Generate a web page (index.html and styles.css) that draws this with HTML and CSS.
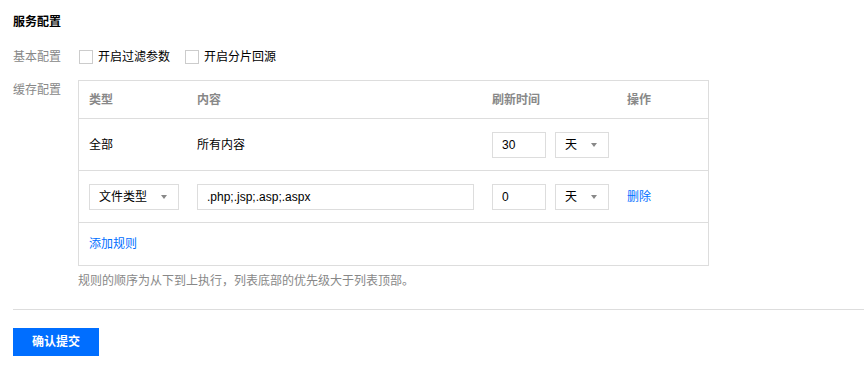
FILE: index.html
```html
<!DOCTYPE html>
<html lang="zh-CN">
<head>
  <meta charset="UTF-8">
  <meta name="viewport" content="width=device-width, initial-scale=1.0">
  <title>服务配置</title>
  <link rel="stylesheet" href="styles.css">
</head>
<body>
  <div class="page">
    <h3 class="section-title">服务配置</h3>

    <div class="form-row">
      <label class="form-label">基本配置</label>
      <div class="form-ctrl checks">
        <label class="check"><input type="checkbox"><span>开启过滤参数</span></label>
        <label class="check"><input type="checkbox"><span>开启分片回源</span></label>
      </div>
    </div>

    <div class="form-row cache-row">
      <label class="form-label">缓存配置</label>
      <div class="form-ctrl">
        <div class="rule-table">
          <div class="tr th">
            <div class="td">类型</div>
            <div class="td">内容</div>
            <div class="td">刷新时间</div>
            <div class="td">操作</div>
          </div>
          <div class="tr">
            <div class="td">全部</div>
            <div class="td">所有内容</div>
            <div class="td time">
              <input class="text-input num" type="text" value="30">
              <div class="dropdown unit">天<i class="caret"></i></div>
            </div>
            <div class="td"></div>
          </div>
          <div class="tr">
            <div class="td">
              <div class="dropdown type">文件类型<i class="caret"></i></div>
            </div>
            <div class="td">
              <input class="text-input content" type="text" value=".php;.jsp;.asp;.aspx">
            </div>
            <div class="td time">
              <input class="text-input num" type="text" value="0">
              <div class="dropdown unit">天<i class="caret"></i></div>
            </div>
            <div class="td"><a class="link" href="#">删除</a></div>
          </div>
          <div class="tr last">
            <div class="td"><a class="link" href="#">添加规则</a></div>
          </div>
        </div>
        <p class="hint">规则的顺序为从下到上执行，列表底部的优先级大于列表顶部。</p>
      </div>
    </div>

    <div class="footer">
      <button class="btn-primary">确认提交</button>
    </div>
  </div>
</body>
</html>
```

FILE: styles.css
```css
body {
  margin: 0;
  background: #fff;
  color: #000;
  font-family: "Liberation Sans", "Noto Sans CJK SC", sans-serif;
  font-size: 12px;
  line-height: 20px;
}

.page {
  padding: 12px 0 0 13px;
}

.section-title {
  margin: 0;
  font-size: 12px;
  line-height: 20px;
  font-weight: bold;
}

.form-row {
  display: flex;
  margin-top: 15px;
}

.cache-row {
  margin-top: 13px;
}

.form-label {
  width: 65px;
  flex: none;
  color: #888;
}

.checks {
  display: flex;
  gap: 15px;
  padding-left: 1px;
}

.check {
  display: flex;
  align-items: center;
}

.check input {
  appearance: none;
  width: 14px;
  height: 14px;
  margin: 0 5px 0 0;
  border: 1px solid #ccc;
  background: #fff;
}

.rule-table {
  width: 629px;
  border: 1px solid #ddd;
}

.tr {
  display: grid;
  grid-template-columns: 108px 295px 135px 1fr;
  align-items: center;
  height: 51px;
  border-bottom: 1px solid #ddd;
}

.tr.th {
  height: 37px;
  color: #888;
  font-weight: bold;
}

.tr.last {
  height: 42px;
  border-bottom: none;
}

.td {
  padding-left: 10px;
  display: flex;
  align-items: center;
}

.time {
  gap: 9px;
}

.text-input {
  box-sizing: border-box;
  height: 26px;
  margin: 0;
  padding: 0 9px;
  border: 1px solid #ddd;
  font: inherit;
  color: #000;
  outline: none;
}

.text-input.num {
  width: 54px;
}

.text-input.content {
  width: 277px;
}

.dropdown {
  box-sizing: border-box;
  height: 26px;
  padding: 0 11px 0 9px;
  border: 1px solid #ddd;
  display: flex;
  align-items: center;
  justify-content: space-between;
}

.dropdown.unit {
  width: 54px;
}

.dropdown.type {
  width: 90px;
}

.caret {
  width: 0;
  height: 0;
  border-left: 3px solid transparent;
  border-right: 3px solid transparent;
  border-top: 4px solid #888;
}

.link {
  color: #006eff;
  text-decoration: none;
}

.hint {
  margin: 5px 0 0;
  color: #888;
}

.footer {
  margin-top: 18px;
  padding-top: 18px;
  border-top: 1px solid #ddd;
}

.btn-primary {
  width: 86px;
  height: 28px;
  border: none;
  background: #006eff;
  color: #fff;
  font: inherit;
  font-weight: bold;
  cursor: pointer;
}
```
